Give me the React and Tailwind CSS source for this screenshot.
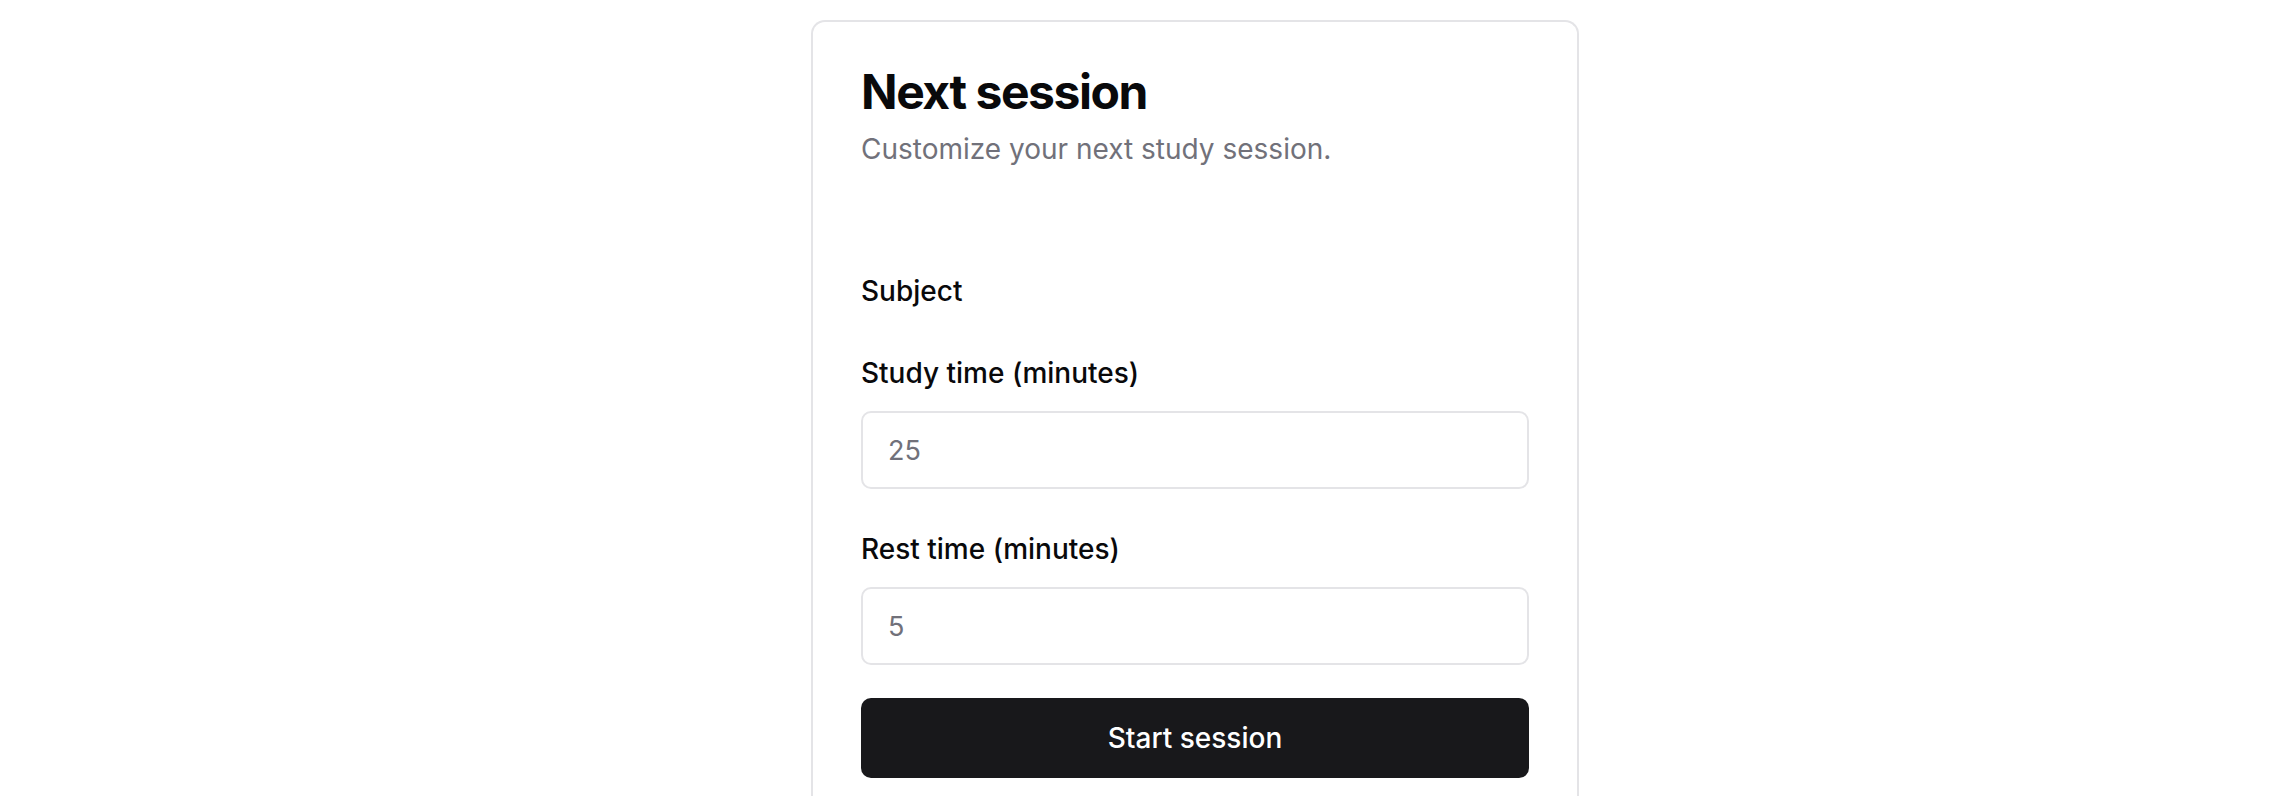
const Field = ({ label, value }) => (
  <div className="flex flex-col">
    <label className="text-[28px] leading-none font-medium text-[#09090b]">{label}</label>
    <input
      type="number"
      placeholder={value}
      className="mt-[24px] h-[78px] w-full rounded-[10px] border-2 border-[#e4e4e7] bg-white px-[25px] text-[27px] text-[#09090b] placeholder:text-[#71717a] outline-none"
    />
  </div>
);

export default function App() {
  return (
    <div
      className="flex min-h-[796px] justify-center bg-white pl-[98px] pt-5"
      style={{ fontFamily: 'Inter, "Noto Sans", sans-serif' }}
    >
      <div className="w-[768px] rounded-t-[14px] border-2 border-b-0 border-[#e4e4e7] px-[48px] pt-[46px]">
        <h1 className="text-[48px] leading-none font-bold tracking-[-0.03em] text-[#09090b]">Next session</h1>
        <p className="mt-[19px] text-[28px] leading-none text-[#71717a]">Customize your next study session.</p>

        <div className="mt-[114px] flex flex-col">
          <span className="text-[28px] leading-none font-medium text-[#09090b]">Subject</span>
          <div className="mt-[54px]">
            <Field label="Study time (minutes)" value="25" />
          </div>
          <div className="mt-[46px]">
            <Field label="Rest time (minutes)" value="5" />
          </div>
          <button className="mt-[33px] h-[80px] w-full rounded-[10px] bg-[#18181b] text-[28px] leading-none font-medium text-white">
            Start session
          </button>
        </div>
      </div>
    </div>
  );
}
